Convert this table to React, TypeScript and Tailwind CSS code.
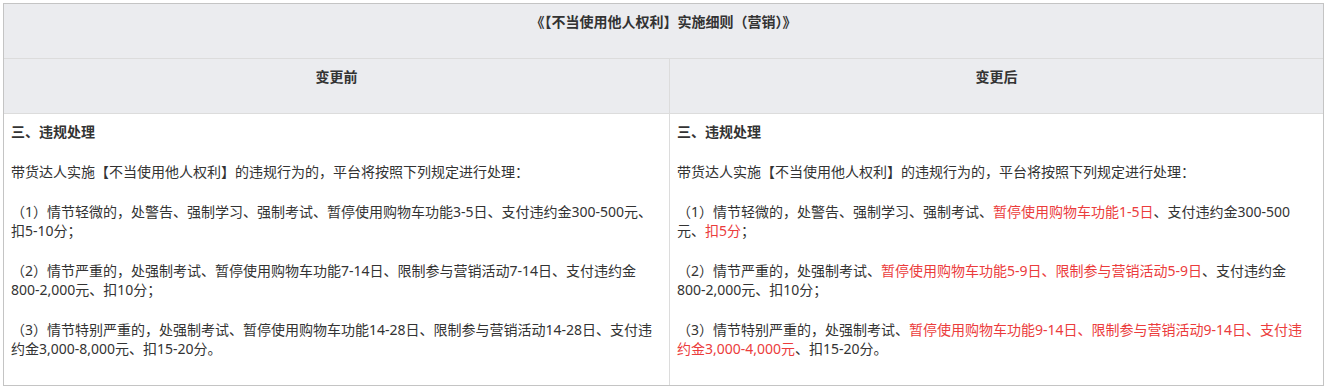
const red = 'text-[#eb3c3c]';

function Before() {
  return (
    <div className="border-r border-[#dcdcdc] px-[7px] pt-[8px] pb-[6px]">
      <p className="mb-[21px] font-bold">三、违规处理</p>
      <p className="mb-[21px]">带货达人实施【不当使用他人权利】的违规行为的，平台将按照下列规定进行处理：</p>
      <p className="mb-[21px] whitespace-nowrap">
        （1）情节轻微的，处警告、强制学习、强制考试、暂停使用购物车功能3-5日、支付违约金300-500元、
        <br />
        扣5-10分；
      </p>
      <p className="mb-[21px] whitespace-nowrap">
        （2）情节严重的，处强制考试、暂停使用购物车功能7-14日、限制参与营销活动7-14日、支付违约金
        <br />
        800-2,000元、扣10分；
      </p>
      <p className="mb-[21px] whitespace-nowrap">
        （3）情节特别严重的，处强制考试、暂停使用购物车功能14-28日、限制参与营销活动14-28日、支付违
        <br />
        约金3,000-8,000元、扣15-20分。
      </p>
    </div>
  );
}

function After() {
  return (
    <div className="px-[7px] pt-[8px] pb-[6px]">
      <p className="mb-[21px] font-bold">三、违规处理</p>
      <p className="mb-[21px]">带货达人实施【不当使用他人权利】的违规行为的，平台将按照下列规定进行处理：</p>
      <p className="mb-[21px] whitespace-nowrap">
        （1）情节轻微的，处警告、强制学习、强制考试、
        <span className={red}>暂停使用购物车功能1-5日</span>
        、支付违约金300-500
        <br />
        元、<span className={red}>扣5分</span>；
      </p>
      <p className="mb-[21px] whitespace-nowrap">
        （2）情节严重的，处强制考试、
        <span className={red}>暂停使用购物车功能5-9日、限制参与营销活动5-9日</span>
        、支付违约金
        <br />
        800-2,000元、扣10分；
      </p>
      <p className="mb-[21px] whitespace-nowrap">
        （3）情节特别严重的，处强制考试、
        <span className={red}>暂停使用购物车功能9-14日、限制参与营销活动9-14日、支付违</span>
        <br />
        <span className={red}>约金3,000-4,000元</span>、扣15-20分。
      </p>
    </div>
  );
}

export default function App() {
  return (
    <div className="min-h-screen bg-white pt-[3px] pl-[3px]">
      <div className="w-[1321px] border border-[#c4c4c4] font-['Noto_Sans','Noto_Sans_CJK_SC',sans-serif] text-[14px] leading-[19px] text-[#333]">
        <div className="h-[55px] border-b border-[#dcdcdc] bg-[#ebecef] pt-[8px] text-center font-bold">
          《【不当使用他人权利】实施细则（营销）》
        </div>
        <div className="grid h-[55px] grid-cols-[666px_1fr] border-b border-[#dcdcdc] bg-[#ebecef] text-center font-bold">
          <div className="border-r border-[#dcdcdc] pt-[8px]">变更前</div>
          <div className="pt-[8px]">变更后</div>
        </div>
        <div className="grid grid-cols-[666px_1fr]">
          <Before />
          <After />
        </div>
      </div>
    </div>
  );
}
